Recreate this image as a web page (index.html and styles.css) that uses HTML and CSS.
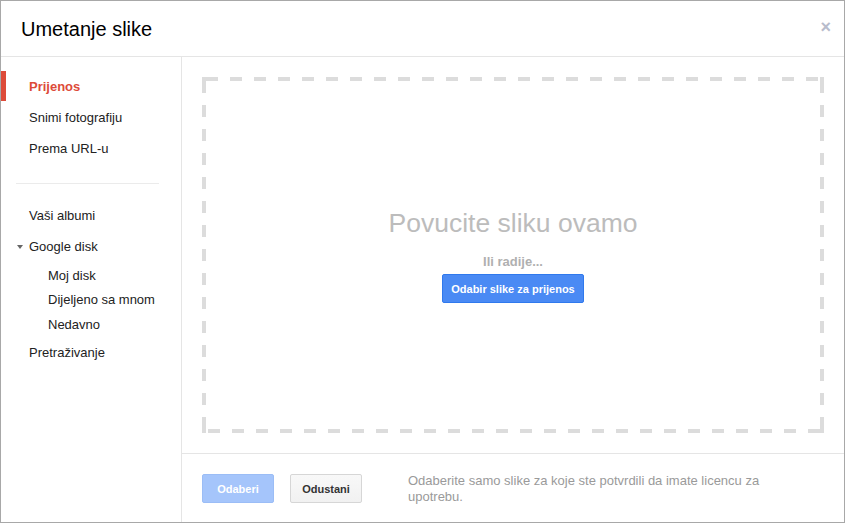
FILE: index.html
```html
<!DOCTYPE html>
<html>
<head>
<meta charset="utf-8">
<link rel="stylesheet" href="styles.css">
</head>
<body>
<div class="dialog">
  <div class="header">
    <div class="title">Umetanje slike</div>
    <div class="close">×</div>
  </div>
  <div class="body">
    <div class="sidebar">
      <div class="item active">Prijenos</div>
      <div class="item">Snimi fotografiju</div>
      <div class="item">Prema URL-u</div>
      <div class="divider"></div>
      <div class="item">Vaši albumi</div>
      <div class="item tree"><span class="arrow"></span>Google disk</div>
      <div class="sub first">Moj disk</div>
      <div class="sub">Dijeljeno sa mnom</div>
      <div class="sub last">Nedavno</div>
      <div class="item">Pretraživanje</div>
    </div>
    <div class="main">
      <div class="content">
        <div class="dropzone">
          <div class="drop-title">Povucite sliku ovamo</div>
          <div class="or">Ili radije...</div>
          <button class="btn-blue">Odabir slike za prijenos</button>
        </div>
      </div>
      <div class="footer">
        <button class="btn btn-select">Odaberi</button>
        <button class="btn btn-cancel">Odustani</button>
        <div class="note">Odaberite samo slike za koje ste potvrdili da imate licencu za upotrebu.</div>
      </div>
    </div>
  </div>
</div>
</body>
</html>
```
FILE: styles.css
```css
* { box-sizing: border-box; }
html, body { margin: 0; padding: 0; background: #fff; }
body { font-family: Arial, "Liberation Sans", sans-serif; color: #222; }
.dialog {
  width: 845px; height: 523px;
  border: 1px solid #a8a8a8;
  display: flex; flex-direction: column;
  background: #fff;
}
.header {
  height: 56px; flex: none;
  border-bottom: 1px solid #e5e5e5;
  display: flex; align-items: center; justify-content: space-between;
  padding: 0 13px 0 20px;
}
.title { font-size: 20px; color: #000; margin-top: 1px; }
.close { font-size: 18px; color: #b8bccc; margin-top: -3px; font-weight: bold; }
.body { flex: 1; display: flex; min-height: 0; }
.sidebar {
  width: 181px; flex: none;
  border-right: 1px solid #e5e5e5;
  padding-top: 14px;
  font-size: 13px;
}
.item {
  height: 31px; line-height: 31px;
  padding-left: 28px;
  position: relative;
}
.item.active { color: #dd4b39; font-weight: bold; }
.item.active::before {
  content: ""; position: absolute; left: 0; top: 0;
  width: 5px; height: 30px; background: #dd4b39;
}
.divider { height: 1px; background: #ebebeb; margin: 19px 22px 16px 15px; }
.tree .arrow {
  position: absolute; left: 16px; top: 14px;
  width: 0; height: 0;
  border-left: 3.5px solid transparent; border-right: 3.5px solid transparent;
  border-top: 4px solid #666;
}
.sub { height: 24px; line-height: 24px; padding-left: 47px; }
.sub.first { margin-top: 2px; }
.sub.last { height: 25px; line-height: 26px; }
.main { flex: 1; display: flex; flex-direction: column; min-width: 0; }
.content { flex: 1; padding: 20px; }
.dropzone {
  height: 356px;
  display: flex; flex-direction: column; align-items: center;
  padding-top: 131px;
  background:
    linear-gradient(#dcdcdc, #dcdcdc) 0 0 / 4px 4px no-repeat,
    linear-gradient(#dcdcdc, #dcdcdc) 0 100% / 4px 4px no-repeat,
    linear-gradient(#dcdcdc, #dcdcdc) 100% 0 / 4px 4px no-repeat,
    linear-gradient(#dcdcdc, #dcdcdc) 100% 100% / 4px 4px no-repeat,
    repeating-linear-gradient(90deg, #dcdcdc 0 12px, transparent 12px 24px) 4px 0 / 612px 4px no-repeat,
    repeating-linear-gradient(90deg, #dcdcdc 0 12px, transparent 12px 24px) 6px 100% / 612px 4px no-repeat,
    repeating-linear-gradient(180deg, #dcdcdc 0 12px, transparent 12px 24px) 0 4px / 4px 348px no-repeat,
    repeating-linear-gradient(180deg, #dcdcdc 0 12px, transparent 12px 24px) 100% 4px / 4px 348px no-repeat;
}
.drop-title { font-size: 26.5px; color: #bcbcbc; line-height: 30px; }
.or { font-size: 13px; font-weight: bold; color: #b0b0b0; margin-top: 16px; line-height: 16px; }
.btn-blue {
  margin-top: 4px;
  height: 29px; width: 142px;
  background: #4a8af4;
  border: 1px solid #3079ed;
  border-radius: 2px;
  color: #fff; font-weight: bold; font-size: 11px;
  font-family: Arial, "Liberation Sans", sans-serif;
}
.footer {
  height: 69px; flex: none;
  border-top: 1px solid #e5e5e5;
  display: flex; align-items: flex-start;
  padding: 20px 0 0 20px;
}
.btn {
  height: 29px; border-radius: 2px;
  font-weight: bold; font-size: 11px;
  font-family: Arial, "Liberation Sans", sans-serif;
}
.btn-select {
  width: 72px; background: #a5c5fb; border: 1px solid #9bbdf6; color: #fff;
}
.btn-cancel {
  width: 72px; margin-left: 16px;
  background: linear-gradient(#f8f8f8, #f1f1f1);
  border: 1px solid #d6d6d6; color: #333;
}
.note {
  margin-left: 46px; margin-top: -1px;
  width: 380px;
  font-size: 13px; line-height: 16px; color: #9a9a9a;
}
```
